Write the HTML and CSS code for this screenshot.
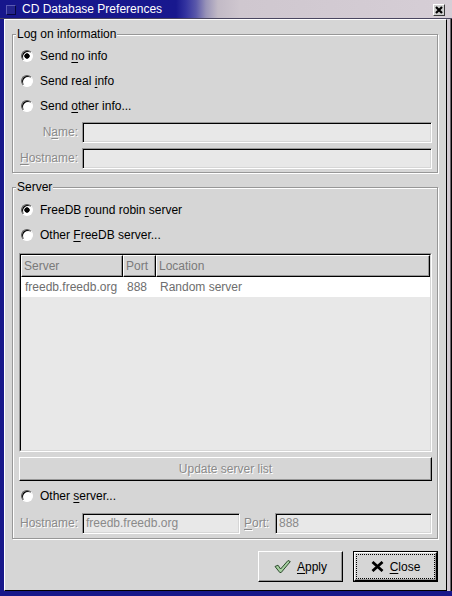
FILE: index.html
```html
<!DOCTYPE html>
<html>
<head>
<meta charset="utf-8">
<title>CD Database Preferences</title>
<link rel="stylesheet" href="styles.css">
</head>
<body>
<div class="window">
  <div class="titlebar">
    <div class="tb-icon"></div>
    <div class="title">CD Database Preferences</div>
    <div class="tb-close">
      <svg width="10" height="10" viewBox="0 0 10 10"><path d="M2 2 L8 8 M8 2 L2 8" stroke="#000" stroke-width="2.2"/></svg>
    </div>
  </div>
  <div class="body">
    <div class="content">
      <div class="frame frame1">
        <div class="legend">Log on information</div>
        <div class="radios r1">
          <div class="radio-row"><span class="radio on"></span><span>Send <u>n</u>o info</span></div>
          <div class="radio-row"><span class="radio"></span><span>Send real <u>i</u>nfo</span></div>
          <div class="radio-row"><span class="radio"></span><span>Send <u>o</u>ther info...</span></div>
        </div>
        <div class="field-row fr-first">
          <span class="lbl dis">N<u>a</u>me:</span>
          <div class="entry"></div>
        </div>
        <div class="field-row fr-second">
          <span class="lbl dis"><u>H</u>ostname:</span>
          <div class="entry"></div>
        </div>
      </div>

      <div class="frame frame2">
        <div class="legend">Server</div>
        <div class="radios r2">
          <div class="radio-row"><span class="radio on"></span><span>FreeDB <u>r</u>ound robin server</span></div>
          <div class="radio-row"><span class="radio"></span><span>Other <u>F</u>reeDB server...</span></div>
        </div>
        <div class="list">
          <div class="list-in">
            <div class="lgrid lhead">
              <div class="hcell">Server</div>
              <div class="hcell">Port</div>
              <div class="hcell">Location</div>
            </div>
            <div class="lgrid lrow">
              <div class="rcell">freedb.freedb.org</div>
              <div class="rcell">888</div>
              <div class="rcell">Random server</div>
            </div>
          </div>
        </div>
        <div class="btn-wide dis">Update server list</div>
        <div class="radio-row r3"><span class="radio"></span><span>Other <u>s</u>erver...</span></div>
        <div class="field-row fr-bottom">
          <span class="lbl dis">Hostname:</span>
          <div class="entry host">freedb.freedb.org</div>
          <span class="plbl dis"><u>P</u>ort:</span>
          <div class="entry">888</div>
        </div>
      </div>

      <div class="buttons">
        <div class="btn">
          <svg width="17" height="13" viewBox="0 0 17 13"><path d="M1 6.5 L4 5.2 L6.6 9 L14 0.5 L16.3 1.6 L7.2 12.5 L5.8 12.5 Z" fill="#a6cfa0" stroke="#2c4a2c" stroke-width="1"/></svg>
          <span><u>A</u>pply</span>
        </div>
        <div class="btn default">
          <div class="face">
            <svg width="13" height="11" viewBox="0 0 13 11"><path d="M1.5 1 L11.5 10 M11.5 1 L1.5 10" stroke="#000" stroke-width="2.8"/></svg>
            <span><u>C</u>lose</span>
          </div>
        </div>
      </div>
    </div>
    <div class="rside"></div>
  </div>
</div>
</body>
</html>
```

FILE: styles.css
```css
* { box-sizing: border-box; }
html, body { margin: 0; padding: 0; }
body {
  font-family: "Liberation Sans", Arial, sans-serif;
  font-size: 12px;
  color: #000;
  background: #d6d6d6;
}
u { text-underline-offset: 2px; text-decoration-thickness: 1px; }

.window {
  width: 452px;
  height: 596px;
  display: flex;
  flex-direction: column;
  background: #18188a;
  padding-bottom: 5px;
}

.titlebar {
  height: 19px;
  flex: none;
  display: flex;
  align-items: center;
  padding: 0 7px 0 6px;
  background: linear-gradient(to right, #16168c 0, #18188e 176px, #3434a0 186px, #5a58aa 196px, #9893b8 206px, #c2bac6 218px, #cfc7cf 240px, #d6ced6 100%);
  box-shadow: inset 0 -1px 0 #4a4660;
}
.tb-icon {
  flex: none;
  width: 10px;
  height: 10px;
  background: #24248e;
  border: 1px solid;
  border-color: #5a5ab4 #060640 #060640 #5a5ab4;
}
.title {
  color: #fff;
  margin-left: 6px;
  line-height: 19px;
}
.tb-close {
  margin-left: auto;
  width: 12px;
  height: 12px;
  background: #cfcfcf;
  border: 1px solid;
  border-color: #fff #3a3a3a #3a3a3a #fff;
  display: flex;
  align-items: center;
  justify-content: center;
}

.body {
  flex: 1;
  display: flex;
  padding-left: 4px;
}
.content {
  flex: 1;
  background: #d6d6d6;
  border: 1px solid;
  border-color: #fff #000 #000 #fff;
  padding: 14px 8px 8px 7px;
  display: flex;
  flex-direction: column;
}
.rside {
  width: 5px;
  background: linear-gradient(to right, #d2cad2 0 3px, #6a666a 3px 4px, #000 4px);
}

.frame {
  border: 1px solid #979797;
  box-shadow: inset 1px 1px 0 #fff, 1px 1px 0 #fff;
  padding: 0 5px 0 6px;
}
.frame1 { padding-bottom: 3px; }
.frame2 { margin-top: 14px; padding-bottom: 4px; }

.legend {
  width: fit-content;
  margin: -8px 0 0 -3px;
  padding: 0 1px;
  line-height: 14px;
  background: #d6d6d6;
}

.radios.r1 { margin-top: 3px; }
.radios.r2 { margin-top: 4px; }
.radio-row {
  display: flex;
  height: 25px;
  line-height: 24px;
  margin-left: 2px;
}
.radio {
  flex: none;
  width: 12px;
  height: 12px;
  margin-top: 6px;
  margin-right: 7px;
  border-radius: 50%;
  background: #fff;
  border: 1px solid;
  border-color: #5a5a5a #fff #fff #5a5a5a;
  box-shadow: inset 1px 1px 0 #000;
}
.radio.on {
  background: radial-gradient(circle at 50% 50%, #000 0 2.4px, #fff 3px);
}

.field-row {
  display: flex;
  gap: 4px;
  height: 21px;
}
.fr-first { margin-top: 3px; }
.fr-second { margin-top: 5px; }
.fr-bottom { margin-top: 4px; }
.lbl {
  flex: none;
  width: 59px;
  text-align: right;
  line-height: 21px;
}
.plbl {
  flex: none;
  width: 27px;
  line-height: 21px;
}
.dis {
  color: #8a8a8a;
  text-shadow: 1px 1px 0 #fff;
}
.entry {
  flex: 1;
  height: 21px;
  border: 1px solid;
  border-color: #979797 #fff #fff #979797;
  box-shadow: inset 1px 1px 0 #000, inset -1px -1px 0 #d6d6d6;
  background: #e8e8e8;
  padding: 0 3px;
  line-height: 19px;
  color: #8a8a8a;
  white-space: nowrap;
  overflow: hidden;
}
.entry.host { flex: none; width: 158px; }

.list {
  margin-top: 5px;
  height: 199px;
  border: 1px solid;
  border-color: #979797 #fff #fff #979797;
}
.list-in {
  height: 100%;
  border: 1px solid;
  border-color: #000 #d6d6d6 #d6d6d6 #000;
  background: #e8e8e8;
}
.lgrid {
  display: grid;
  grid-template-columns: 102px 33px 1fr;
}
.lhead { height: 22px; }
.hcell {
  border: 1px solid;
  border-color: #fff #000 #000 #fff;
  box-shadow: inset -1px -1px 0 #979797;
  background: #d6d6d6;
  padding-left: 2px;
  line-height: 20px;
  color: #7a7a7a;
  white-space: nowrap;
  overflow: hidden;
}
.lrow {
  height: 20px;
  background: #fff;
}
.rcell {
  padding-left: 4px;
  line-height: 20px;
  color: #6e6e6e;
  white-space: nowrap;
}

.btn-wide {
  margin-top: 5px;
  height: 24px;
  border: 1px solid;
  border-color: #fff #000 #000 #fff;
  box-shadow: inset -1px -1px 0 #979797;
  text-align: center;
  line-height: 22px;
}
.r3 { margin-top: 3px; }

.buttons {
  display: flex;
  justify-content: flex-end;
  gap: 10px;
  margin-top: 12px;
}
.btn {
  width: 85px;
  height: 31px;
  border: 1px solid;
  border-color: #fff #000 #000 #fff;
  box-shadow: inset -1px -1px 0 #979797;
  display: flex;
  align-items: center;
  justify-content: center;
  gap: 6px;
}
.btn.default {
  border-color: #000;
  box-shadow: none;
  display: block;
}
.face {
  height: 100%;
  border: 1px solid;
  border-color: #fff #000 #000 #fff;
  box-shadow: inset -1px -1px 0 #979797;
  outline: 1px dotted #000;
  outline-offset: -3px;
  display: flex;
  align-items: center;
  justify-content: center;
  gap: 6px;
}
```
